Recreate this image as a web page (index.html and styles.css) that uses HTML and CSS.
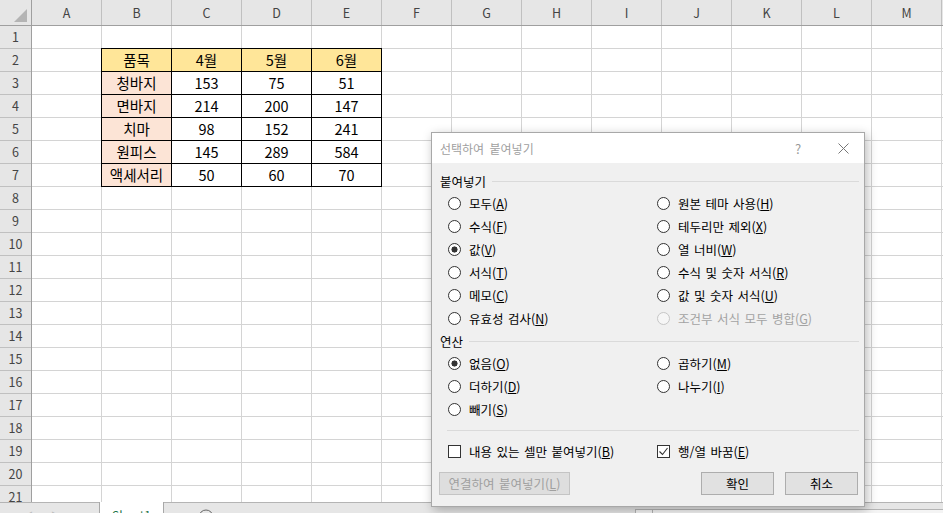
FILE: index.html
```html
<!DOCTYPE html>
<html lang="ko">
<head>
    <meta charset="UTF-8">
    <title>선택하여 붙여넣기</title>
    <link rel="stylesheet" href="styles.css">
</head>
<body>
    <div class="sheet">
        <div class="corner"><span class="corner-tri"></span></div>
        <div class="col-heads">
            <div>A</div><div>B</div><div>C</div><div>D</div><div>E</div><div>F</div><div>G</div>
            <div>H</div><div>I</div><div>J</div><div>K</div><div>L</div><div>M</div>
        </div>
        <div class="row-heads">
            <div>1</div><div>2</div><div>3</div><div>4</div><div>5</div><div>6</div><div>7</div>
            <div>8</div><div>9</div><div>10</div><div>11</div><div>12</div><div>13</div><div>14</div>
            <div>15</div><div>16</div><div>17</div><div>18</div><div>19</div><div>20</div><div>21</div>
        </div>
        <div class="cells">
            <div class="data">
                <div class="th">품목</div><div class="th">4월</div><div class="th">5월</div><div class="th">6월</div>
                <div class="item">청바지</div><div>153</div><div>75</div><div>51</div>
                <div class="item">면바지</div><div>214</div><div>200</div><div>147</div>
                <div class="item">치마</div><div>98</div><div>152</div><div>241</div>
                <div class="item">원피스</div><div>145</div><div>289</div><div>584</div>
                <div class="item">액세서리</div><div>50</div><div>60</div><div>70</div>
            </div>
        </div>
    </div>

    <div class="tabbar">
        <div class="tab-nav"><span>◀</span><span>▶</span></div>
        <div class="tab active">Sheet1</div>
        <div class="tab-add">
            <svg width="16" height="16" viewBox="0 0 16 16"><circle cx="8" cy="8" r="7" fill="none" stroke="#666" stroke-width="1"/><path d="M8 4.5v7M4.5 8h7" stroke="#666" stroke-width="1"/></svg>
        </div>
        <div class="hscroll"><span class="hs-btn"></span></div>
    </div>

    <div class="dialog">
        <div class="dlg-title">
            <span class="dlg-caption">선택하여 붙여넣기</span>
            <span class="dlg-help">?</span>
            <span class="dlg-close">
                <svg width="11" height="11" viewBox="0 0 11 11"><path d="M0.5 0.5l10 10M10.5 0.5l-10 10" stroke="#777" stroke-width="1"/></svg>
            </span>
        </div>
        <div class="dlg-body">
            <div class="group-head"><span>붙여넣기</span><i></i></div>
            <div class="options">
                <label class="opt"><span class="radio"></span><span>모두(<u>A</u>)</span></label>
                <label class="opt"><span class="radio"></span><span>원본 테마 사용(<u>H</u>)</span></label>
                <label class="opt"><span class="radio"></span><span>수식(<u>F</u>)</span></label>
                <label class="opt"><span class="radio"></span><span>테두리만 제외(<u>X</u>)</span></label>
                <label class="opt"><span class="radio on"></span><span>값(<u>V</u>)</span></label>
                <label class="opt"><span class="radio"></span><span>열 너비(<u>W</u>)</span></label>
                <label class="opt"><span class="radio"></span><span>서식(<u>T</u>)</span></label>
                <label class="opt"><span class="radio"></span><span>수식 및 숫자 서식(<u>R</u>)</span></label>
                <label class="opt"><span class="radio"></span><span>메모(<u>C</u>)</span></label>
                <label class="opt"><span class="radio"></span><span>값 및 숫자 서식(<u>U</u>)</span></label>
                <label class="opt"><span class="radio"></span><span>유효성 검사(<u>N</u>)</span></label>
                <label class="opt disabled"><span class="radio"></span><span>조건부 서식 모두 병합(<u>G</u>)</span></label>
            </div>
            <div class="group-head"><span>연산</span><i></i></div>
            <div class="options">
                <label class="opt"><span class="radio on"></span><span>없음(<u>O</u>)</span></label>
                <label class="opt"><span class="radio"></span><span>곱하기(<u>M</u>)</span></label>
                <label class="opt"><span class="radio"></span><span>더하기(<u>D</u>)</span></label>
                <label class="opt"><span class="radio"></span><span>나누기(<u>I</u>)</span></label>
                <label class="opt"><span class="radio"></span><span>빼기(<u>S</u>)</span></label>
            </div>
            <div class="sep"></div>
            <div class="options checks">
                <label class="opt"><span class="check"></span><span>내용 있는 셀만 붙여넣기(<u>B</u>)</span></label>
                <label class="opt"><span class="check">
                    <svg width="11" height="11" viewBox="0 0 11 11"><path d="M1.5 5.5l3 3 5-6.5" fill="none" stroke="#333" stroke-width="1.1"/></svg>
                </span><span>행/열 바꿈(<u>E</u>)</span></label>
            </div>
            <div class="buttons">
                <button class="btn link" disabled>연결하여 붙여넣기(<u>L</u>)</button>
                <button class="btn ok">확인</button>
                <button class="btn">취소</button>
            </div>
        </div>
    </div>
</body>
</html>
```

FILE: styles.css
```css
body {
    margin: 0;
    width: 943px;
    height: 513px;
    overflow: hidden;
    position: relative;
    background: #fff;
    font-family: "Noto Sans CJK KR", "Noto Sans", sans-serif;
    color: #000;
}

/* Tabellenblatt */
.sheet {
    display: grid;
    grid-template-columns: 32px 1fr;
    grid-template-rows: 26px 1fr;
    height: 502px;
    overflow: hidden;
}

.corner {
    background: #e6e6e6;
    border-right: 1px solid #9f9f9f;
    border-bottom: 1px solid #9f9f9f;
    box-sizing: border-box;
    position: relative;
}

.corner-tri {
    position: absolute;
    right: 4px;
    bottom: 3px;
    width: 0;
    height: 0;
    border-left: 13px solid transparent;
    border-bottom: 13px solid #b4b4b4;
}

.col-heads {
    display: grid;
    grid-template-columns: repeat(13, 70px);
    background: #e6e6e6;
    border-bottom: 1px solid #9f9f9f;
}

.col-heads div {
    border-right: 1px solid #c0c0c0;
    text-align: center;
    font-size: 12.5px;
    line-height: 25px;
    color: #444;
}

.row-heads {
    display: grid;
    grid-auto-rows: 23px;
    background: #e6e6e6;
    border-right: 1px solid #9f9f9f;
}

.row-heads div {
    border-bottom: 1px solid #c0c0c0;
    text-align: center;
    font-size: 12.5px;
    line-height: 22px;
    color: #444;
}

.cells {
    display: grid;
    grid-template-columns: repeat(13, 70px);
    grid-template-rows: repeat(21, 23px);
    background-image:
        linear-gradient(to right, transparent 69px, #d4d4d4 69px),
        linear-gradient(to bottom, transparent 22px, #d4d4d4 22px);
    background-size: 70px 23px;
}

.data {
    grid-column: 2 / span 4;
    grid-row: 2 / span 6;
    margin: -1px 0 0 -1px;
    border-top: 1px solid #000;
    border-left: 1px solid #000;
    display: grid;
    grid-template-columns: repeat(4, 1fr);
    grid-template-rows: repeat(6, 1fr);
    background: #fff;
}

.data div {
    border-right: 1px solid #000;
    border-bottom: 1px solid #000;
    text-align: center;
    font-size: 14.5px;
    line-height: 22px;
}

.data .th {
    background: #ffe699;
}

.data .item {
    background: #fce4d6;
}

/* Blattregister */
.tabbar {
    display: flex;
    height: 30px;
    background: #e6e6e6;
    border-top: 1px solid #b4b4b4;
    box-sizing: border-box;
}

.tab-nav {
    width: 99px;
    display: flex;
    gap: 18px;
    padding: 6px 0 0 24px;
    box-sizing: border-box;
    font-size: 9px;
    color: #bbb;
}

.tab {
    width: 65px;
    margin-top: -1px;
    background: #fff;
    border-left: 1px solid #a8a8a8;
    border-right: 1px solid #a8a8a8;
    box-sizing: border-box;
    text-align: center;
    font-size: 12px;
    line-height: 20px;
    padding-top: 3px;
    color: #217346;
}

.tab-add {
    padding: 3px 0 0 34px;
}

.hscroll {
    margin: 6px 0 0 auto;
    width: 307px;
    border-top: 1px solid #b4b4b4;
    border-left: 1px solid #b4b4b4;
    background: #f4f4f4;
}

.hs-btn {
    display: block;
    width: 16px;
    height: 20px;
    border-right: 1px solid #b4b4b4;
}

/* Dialog "Inhalte einfügen" */
.dialog {
    position: absolute;
    left: 431px;
    top: 132px;
    width: 434px;
    height: 375px;
    box-sizing: border-box;
    border: 1px solid #a8a8a8;
    background: #f0f0f0;
    box-shadow: 2px 3px 10px rgba(0, 0, 0, 0.28);
    font-size: 12.5px;
    word-spacing: 1px;
}

.dlg-title {
    display: flex;
    align-items: center;
    height: 30px;
    background: #fff;
}

.dlg-caption {
    flex: 1;
    padding-left: 8px;
    color: #a0a0a0;
    font-size: 12px;
    word-spacing: 2px;
}

.dlg-help {
    width: 48px;
    text-align: center;
    color: #999;
    font-size: 13px;
}

.dlg-close {
    width: 42px;
    display: flex;
    justify-content: center;
}

.dlg-body {
    padding: 7px 5px 11px 8px;
}

.group-head {
    display: flex;
    align-items: center;
    gap: 6px;
    height: 22px;
}

.group-head i {
    flex: 1;
    height: 1px;
    background: #dadada;
}

.options {
    display: grid;
    grid-template-columns: 209px 1fr;
    grid-auto-rows: 23px;
    padding-left: 8px;
}

.opt {
    display: flex;
    align-items: center;
    gap: 8px;
    white-space: nowrap;
}

.opt u {
    text-underline-offset: 1px;
}

.radio {
    width: 13px;
    height: 13px;
    box-sizing: border-box;
    border: 1px solid #333;
    border-radius: 50%;
    background: #fff;
    flex-shrink: 0;
}

.radio.on {
    background: radial-gradient(circle, #333 0 2.8px, #fff 3.3px);
}

.opt.disabled {
    color: #a3a3a3;
}

.opt.disabled .radio {
    border-color: #c6c6c6;
    background: #f6f6f6;
}

.sep {
    height: 1px;
    margin: 9px 0 0 7px;
    background: #dadada;
}

.checks {
    margin-top: 9px;
}

.check {
    width: 13px;
    height: 13px;
    box-sizing: border-box;
    border: 1px solid #333;
    background: #fff;
    display: flex;
    align-items: center;
    justify-content: center;
    flex-shrink: 0;
}

.buttons {
    display: flex;
    gap: 11px;
    margin: 9px 1px 0 -1px;
}

.btn {
    height: 23px;
    width: 73px;
    padding: 0;
    border: 1px solid #adadad;
    background: #e1e1e1;
    font-family: inherit;
    font-size: 12.5px;
    word-spacing: 1px;
    color: #000;
}

.btn.link {
    width: 131px;
    border-color: #c4c4c4;
    background: #dedede;
    color: #a0a0a0;
}

.btn.ok {
    margin-left: auto;
}
```
